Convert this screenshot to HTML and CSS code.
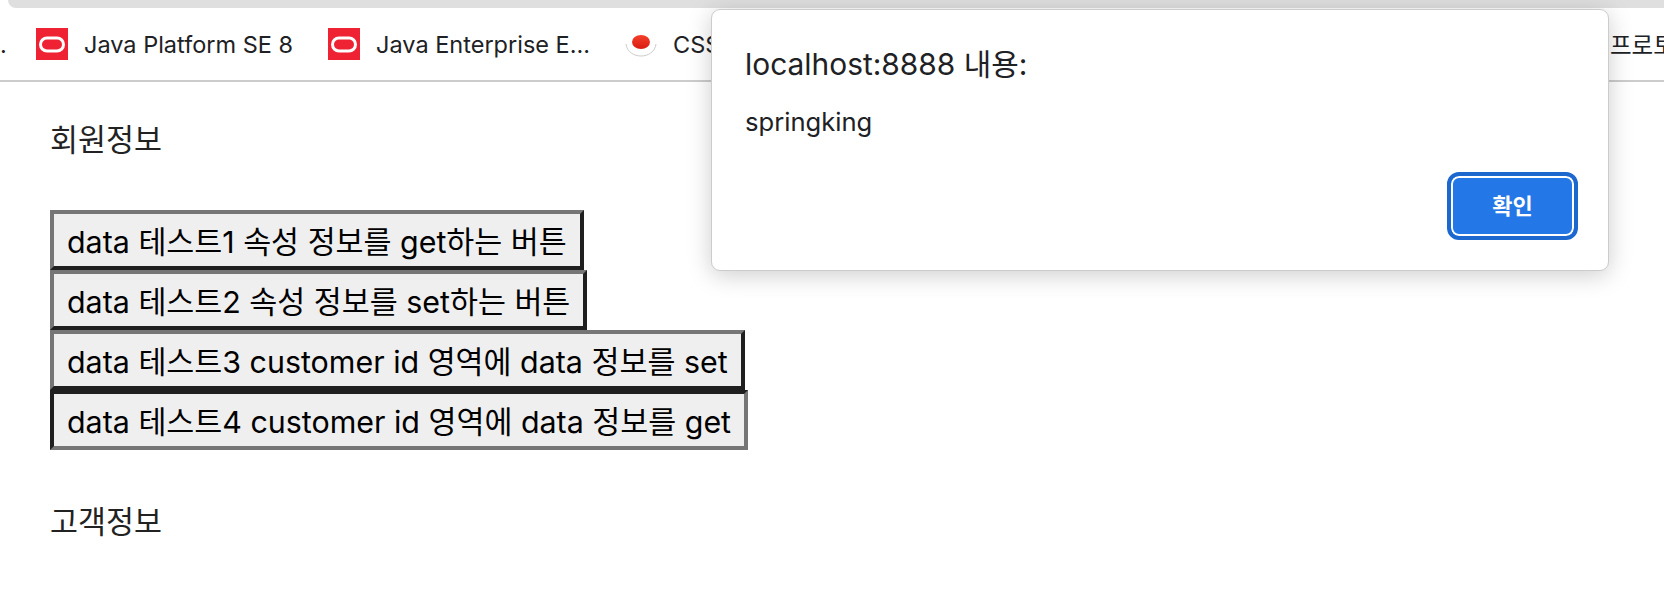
FILE: index.html
```html
<!DOCTYPE html>
<html>
<head>
  <title>회원정보</title>
  <link rel="stylesheet" href="styles.css">
</head>
<body>
  <div class="topbar"></div>
  <div class="bookmarks">
    <span class="mark mark-cut">.</span>
    <span class="mark"><svg class="ico" viewBox="0 0 32 32"><rect width="32" height="32" fill="#ee2233"/><rect x="4.5" y="10" width="23" height="13" rx="6.5" fill="none" stroke="#fff" stroke-width="3"/></svg>Java Platform SE 8</span>
    <span class="mark"><svg class="ico" viewBox="0 0 32 32"><rect width="32" height="32" fill="#ee2233"/><rect x="4.5" y="10" width="23" height="13" rx="6.5" fill="none" stroke="#fff" stroke-width="3"/></svg>Java Enterprise E...</span>
    <span class="mark"><svg class="ico" viewBox="0 0 32 32"><defs><linearGradient id="dot" x1="0" y1="0" x2="0" y2="1"><stop offset="0" stop-color="#f4402c"/><stop offset="1" stop-color="#d91c10"/></linearGradient></defs><path d="M1 16C3 32 29 32 31 16" fill="none" stroke="#ccc" stroke-width="1"/><ellipse cx="16" cy="14" rx="9" ry="7" fill="url(#dot)"/></svg>CSS</span>
    <span class="mark mark-right">프로토</span>
  </div>

  <main class="page">
    <p class="title">회원정보</p>
    <div class="btns">
      <button class="btn">data 테스트1 속성 정보를 get하는 버튼</button>
      <button class="btn">data 테스트2 속성 정보를 set하는 버튼</button>
      <button class="btn">data 테스트3 customer id 영역에 data 정보를 set</button>
      <button class="btn btn-pressed">data 테스트4 customer id 영역에 data 정보를 get</button>
    </div>
    <p class="title title-low">고객정보</p>
  </main>

  <div class="dialog">
    <div class="dialog-title">localhost:8888 내용:</div>
    <div class="dialog-msg">springking</div>
    <div class="dialog-foot"><button class="ok">확인</button></div>
  </div>
</body>
</html>
```

FILE: styles.css
```css
html, body {
  height: 100%;
}
body {
  margin: 0;
  background: #fff;
  color: #202124;
  font-family: Inter, "Noto Sans CJK KR", sans-serif;
  overflow: hidden;
}

.topbar {
  position: absolute;
  top: 0;
  left: 8px;
  right: 0;
  height: 8px;
  background: #dfdfdf;
  border-radius: 0 0 0 14px;
}

.bookmarks {
  display: flex;
  align-items: center;
  height: 82px;
  box-sizing: border-box;
  padding-top: 8px;
  border-bottom: 2px solid #ccc;
  font-size: 23.5px;
  white-space: nowrap;
  overflow: hidden;
}
.mark {
  display: flex;
  align-items: center;
  gap: 16px;
  margin-right: 35px;
}
.mark-cut {
  width: 1px;
}
.ico {
  width: 32px;
  height: 32px;
}
.mark-right {
  position: absolute;
  left: 1610px;
  margin: 0;
}

.page {
  padding-left: 50px;
  color: #000;
}
.title {
  margin: 0;
  padding-top: 40px;
  font-size: 30.4px;
  line-height: 36px;
  color: #222;
}
.title-low {
  padding-top: 54px;
}
.btns {
  display: flex;
  flex-direction: column;
  align-items: flex-start;
  margin-top: 52px;
}
.btn {
  height: 60px;
  padding: 0 13px;
  background: #efefef;
  border: 4px solid;
  border-color: #767676 #1f1f1f #1f1f1f #767676;
  color: #000;
  font: inherit;
  font-size: 30.4px;
  white-space: nowrap;
}
.btn-pressed {
  border-color: #1f1f1f #767676 #767676 #1f1f1f;
}

.dialog {
  position: absolute;
  top: 9px;
  left: 711px;
  width: 898px;
  height: 262px;
  box-sizing: border-box;
  padding: 36px 30px 0 33px;
  background: #fff;
  border-radius: 9px;
  border: 1px solid #ccc;
  box-shadow: 0 4px 24px rgba(0, 0, 0, 0.2);
}
.dialog-title {
  font-size: 29.9px;
  line-height: 36px;
}
.dialog-msg {
  margin-top: 24px;
  font-size: 25.6px;
  line-height: 32px;
}
.dialog-foot {
  display: flex;
  justify-content: flex-end;
  margin-top: 34px;
}
.ok {
  width: 131px;
  height: 68px;
  padding-bottom: 6px;
  background: #2477e6;
  color: #fff;
  font: inherit;
  font-size: 22px;
  font-weight: 600;
  border: 4px solid #1c68cf;
  box-shadow: inset 0 0 0 2px #fff;
  border-radius: 12px;
}
```
